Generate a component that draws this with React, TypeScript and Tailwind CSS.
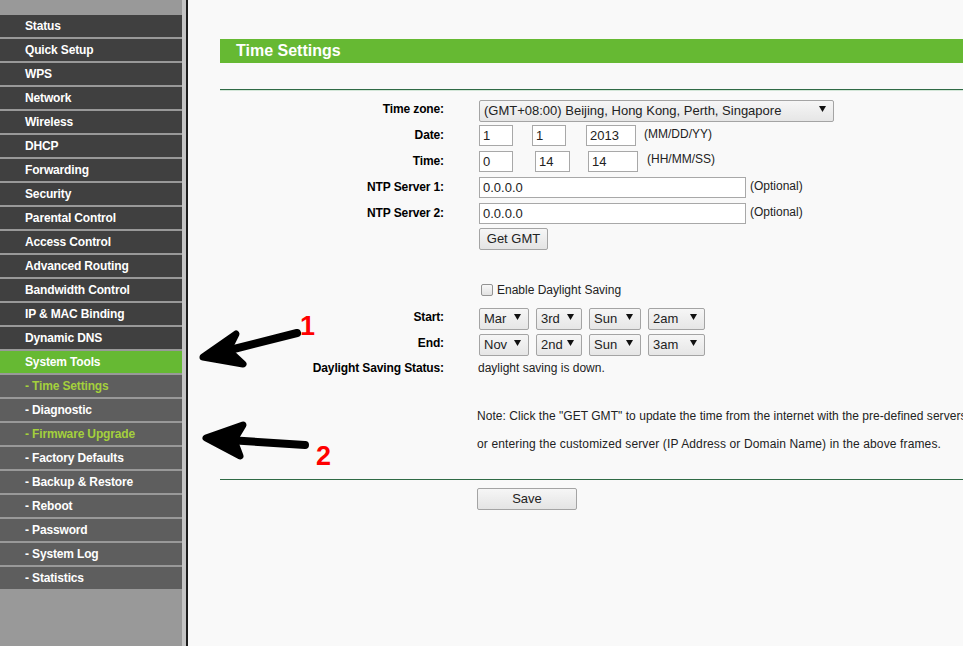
import React from 'react';

type MenuItem = {
  label: string;
  sub?: boolean;
  active?: boolean;
  highlight?: boolean;
};

const menu: MenuItem[] = [
  { label: 'Status' },
  { label: 'Quick Setup' },
  { label: 'WPS' },
  { label: 'Network' },
  { label: 'Wireless' },
  { label: 'DHCP' },
  { label: 'Forwarding' },
  { label: 'Security' },
  { label: 'Parental Control' },
  { label: 'Access Control' },
  { label: 'Advanced Routing' },
  { label: 'Bandwidth Control' },
  { label: 'IP & MAC Binding' },
  { label: 'Dynamic DNS' },
  { label: 'System Tools', active: true },
  { label: 'Time Settings', sub: true, highlight: true },
  { label: 'Diagnostic', sub: true },
  { label: 'Firmware Upgrade', sub: true, highlight: true },
  { label: 'Factory Defaults', sub: true },
  { label: 'Backup & Restore', sub: true },
  { label: 'Reboot', sub: true },
  { label: 'Password', sub: true },
  { label: 'System Log', sub: true },
  { label: 'Statistics', sub: true },
];

const Caret = () => (
  <svg width="7" height="6" viewBox="0 0 7 6" className="pointer-events-none absolute top-1/2 -translate-y-1/2 right-[8px]">
    <path d="M0 0 H7 L3.5 6 Z" fill="#111" />
  </svg>
);

const Select = ({ value, width }: { value: string; width: string }) => (
  <div className={`relative h-[22px] ${width}`}>
    <select
      defaultValue={value}
      className="h-full w-full appearance-none rounded-[2px] border border-[#a4a4a4] bg-gradient-to-b from-[#f6f6f6] to-[#e6e6e6] pl-[4px] text-[13px] text-[#222] outline-none"
    >
      <option>{value}</option>
    </select>
    <Caret />
  </div>
);

const Input = ({ value, width, className = '' }: { value: string; width: string; className?: string }) => (
  <input
    defaultValue={value}
    className={`h-[21px] ${width} border border-[#a8a8a8] bg-white px-[3px] text-[13px] text-[#222] outline-none ${className}`}
  />
);

const Button = ({ children, width }: { children: React.ReactNode; width: string }) => (
  <button className={`h-[22px] ${width} rounded-[2px] border border-[#a4a4a4] bg-gradient-to-b from-[#f6f6f6] to-[#e4e4e4] text-[13px] text-[#222]`}>
    {children}
  </button>
);

const Row = ({ label, children, h = 'h-[26px]' }: { label?: string; children: React.ReactNode; h?: string }) => (
  <div className={`flex items-center ${h}`}>
    <div className="w-[224px] shrink-0 text-right text-[12px] font-bold tracking-[-0.12px] text-black">{label}</div>
    <div className="ml-[35px] flex items-center">{children}</div>
  </div>
);

export default function App() {
  return (
    <div className="relative flex h-[646px] w-full overflow-hidden font-['Liberation_Sans',Arial,sans-serif]">
      <div className="flex w-[182px] shrink-0 flex-col gap-[2px] bg-[#999999] pt-[15px]">
        {menu.map((item) => (
          <div
            key={item.label}
            className={`flex h-[22px] items-center pl-[25px] text-[12px] font-bold tracking-[-0.15px] ${
              item.active ? 'bg-[#66b933]' : item.sub ? 'bg-[#5e5e5e]' : 'bg-[#404040]'
            } ${item.highlight ? 'text-[#a4d03c]' : 'text-white'}`}
          >
            {item.sub ? `- ${item.label}` : item.label}
          </div>
        ))}
      </div>
      <div className="w-[4px] shrink-0 bg-[#c4c4c4]" />
      <div className="w-[2px] shrink-0 bg-[#1c1c1c]" />

      <div className="min-w-0 flex-1 bg-[#f9f9f9] pl-[32px] pt-[39px]">
        <div className="flex h-[24px] items-center bg-[#66b933] pl-[16px] text-[16px] font-bold text-white">
          Time Settings
        </div>
        <div className="mt-[26px] h-px bg-[#2f6a45]" />
        <div className="h-px bg-[#d3e6d8]" />

        <div className="mt-[5px]">
          <Row label="Time zone:">
            <div className="relative h-[22px] w-[355px]">
              <select
                defaultValue="(GMT+08:00) Beijing, Hong Kong, Perth, Singapore"
                className="h-full w-full appearance-none rounded-[2px] border border-[#a4a4a4] bg-gradient-to-b from-[#f6f6f6] to-[#e6e6e6] pl-[4px] text-[13px] text-[#222] outline-none"
              >
                <option>(GMT+08:00) Beijing, Hong Kong, Perth, Singapore</option>
              </select>
              <Caret />
            </div>
          </Row>
          <Row label="Date:">
            <Input value="1" width="w-[34px]" />
            <Input value="1" width="w-[34px]" className="ml-[19px]" />
            <Input value="2013" width="w-[50px]" className="ml-[20px]" />
            <span className="ml-[8px] -mt-[2px] text-[12px] text-[#222]">(MM/DD/YY)</span>
          </Row>
          <Row label="Time:">
            <Input value="0" width="w-[34px]" />
            <Input value="14" width="w-[35px]" className="ml-[22px]" />
            <Input value="14" width="w-[50px]" className="ml-[18px]" />
            <span className="ml-[9px] -mt-[4px] text-[12px] text-[#222]">(HH/MM/SS)</span>
          </Row>
          <Row label="NTP Server 1:">
            <Input value="0.0.0.0" width="w-[267px]" />
            <span className="ml-[4px] -mt-[2px] text-[12px] text-[#222]">(Optional)</span>
          </Row>
          <Row label="NTP Server 2:">
            <Input value="0.0.0.0" width="w-[267px]" />
            <span className="ml-[4px] -mt-[2px] text-[12px] text-[#222]">(Optional)</span>
          </Row>
          <Row>
            <Button width="w-[69px]">Get GMT</Button>
          </Row>

          <div className="mt-[25px]">
            <Row>
              <span className="ml-[2px] h-[12px] w-[12px] rounded-[2px] border border-[#939393] bg-gradient-to-b from-[#f8f8f8] to-[#e2e2e2]" />
              <span className="ml-[4px] text-[12px] text-[#222]">Enable Daylight Saving</span>
            </Row>
          </div>
          <div className="mt-[1px]">
            <Row label="Start:">
              <Select value="Mar" width="w-[50px]" />
              <div className="ml-[7px]"><Select value="3rd" width="w-[46px]" /></div>
              <div className="ml-[7px]"><Select value="Sun" width="w-[52px]" /></div>
              <div className="ml-[7px]"><Select value="2am" width="w-[57px]" /></div>
            </Row>
            <Row label="End:">
              <Select value="Nov" width="w-[50px]" />
              <div className="ml-[7px]"><Select value="2nd" width="w-[46px]" /></div>
              <div className="ml-[7px]"><Select value="Sun" width="w-[52px]" /></div>
              <div className="ml-[7px]"><Select value="3am" width="w-[57px]" /></div>
            </Row>
            <Row label="Daylight Saving Status:" h="h-[24px]">
              <span className="-ml-[1px] text-[12px] text-[#222]">daylight saving is down.</span>
            </Row>
          </div>

          <div className="ml-[257px] mt-[22px] whitespace-nowrap text-[12px] leading-[28px] text-[#222]">
            <p className="tracking-[0.04px]">Note: Click the "GET GMT" to update the time from the internet with the pre-defined servers</p>
            <p className="tracking-[0.13px]">or entering the customized server (IP Address or Domain Name) in the above frames.</p>
          </div>
        </div>

        <div className="mt-[21px] h-px bg-[#2f6a45]" />
        <div className="ml-[257px] mt-[8px] flex">
          <Button width="w-[100px]">Save</Button>
        </div>
      </div>

      <svg className="pointer-events-none absolute left-0 top-0" width="963" height="646" viewBox="0 0 963 646">
        <g stroke="#000" strokeLinecap="round" strokeLinejoin="round" fill="#000">
          <path d="M297 333 L222 352" strokeWidth="8" fill="none" />
          <path d="M203 357 L236 334 L228 350 L243 364 Z" strokeWidth="7" />
          <path d="M305 445 L228 440" strokeWidth="8" fill="none" />
          <path d="M206 438 L243 425 L234 440 L240 456 Z" strokeWidth="7" />
        </g>
      </svg>
      <span className="pointer-events-none absolute left-[300px] top-[313px] text-[27px] font-bold leading-[27px] text-[#f00]">1</span>
      <span className="pointer-events-none absolute left-[316px] top-[443px] text-[27px] font-bold leading-[27px] text-[#f00]">2</span>
    </div>
  );
}
